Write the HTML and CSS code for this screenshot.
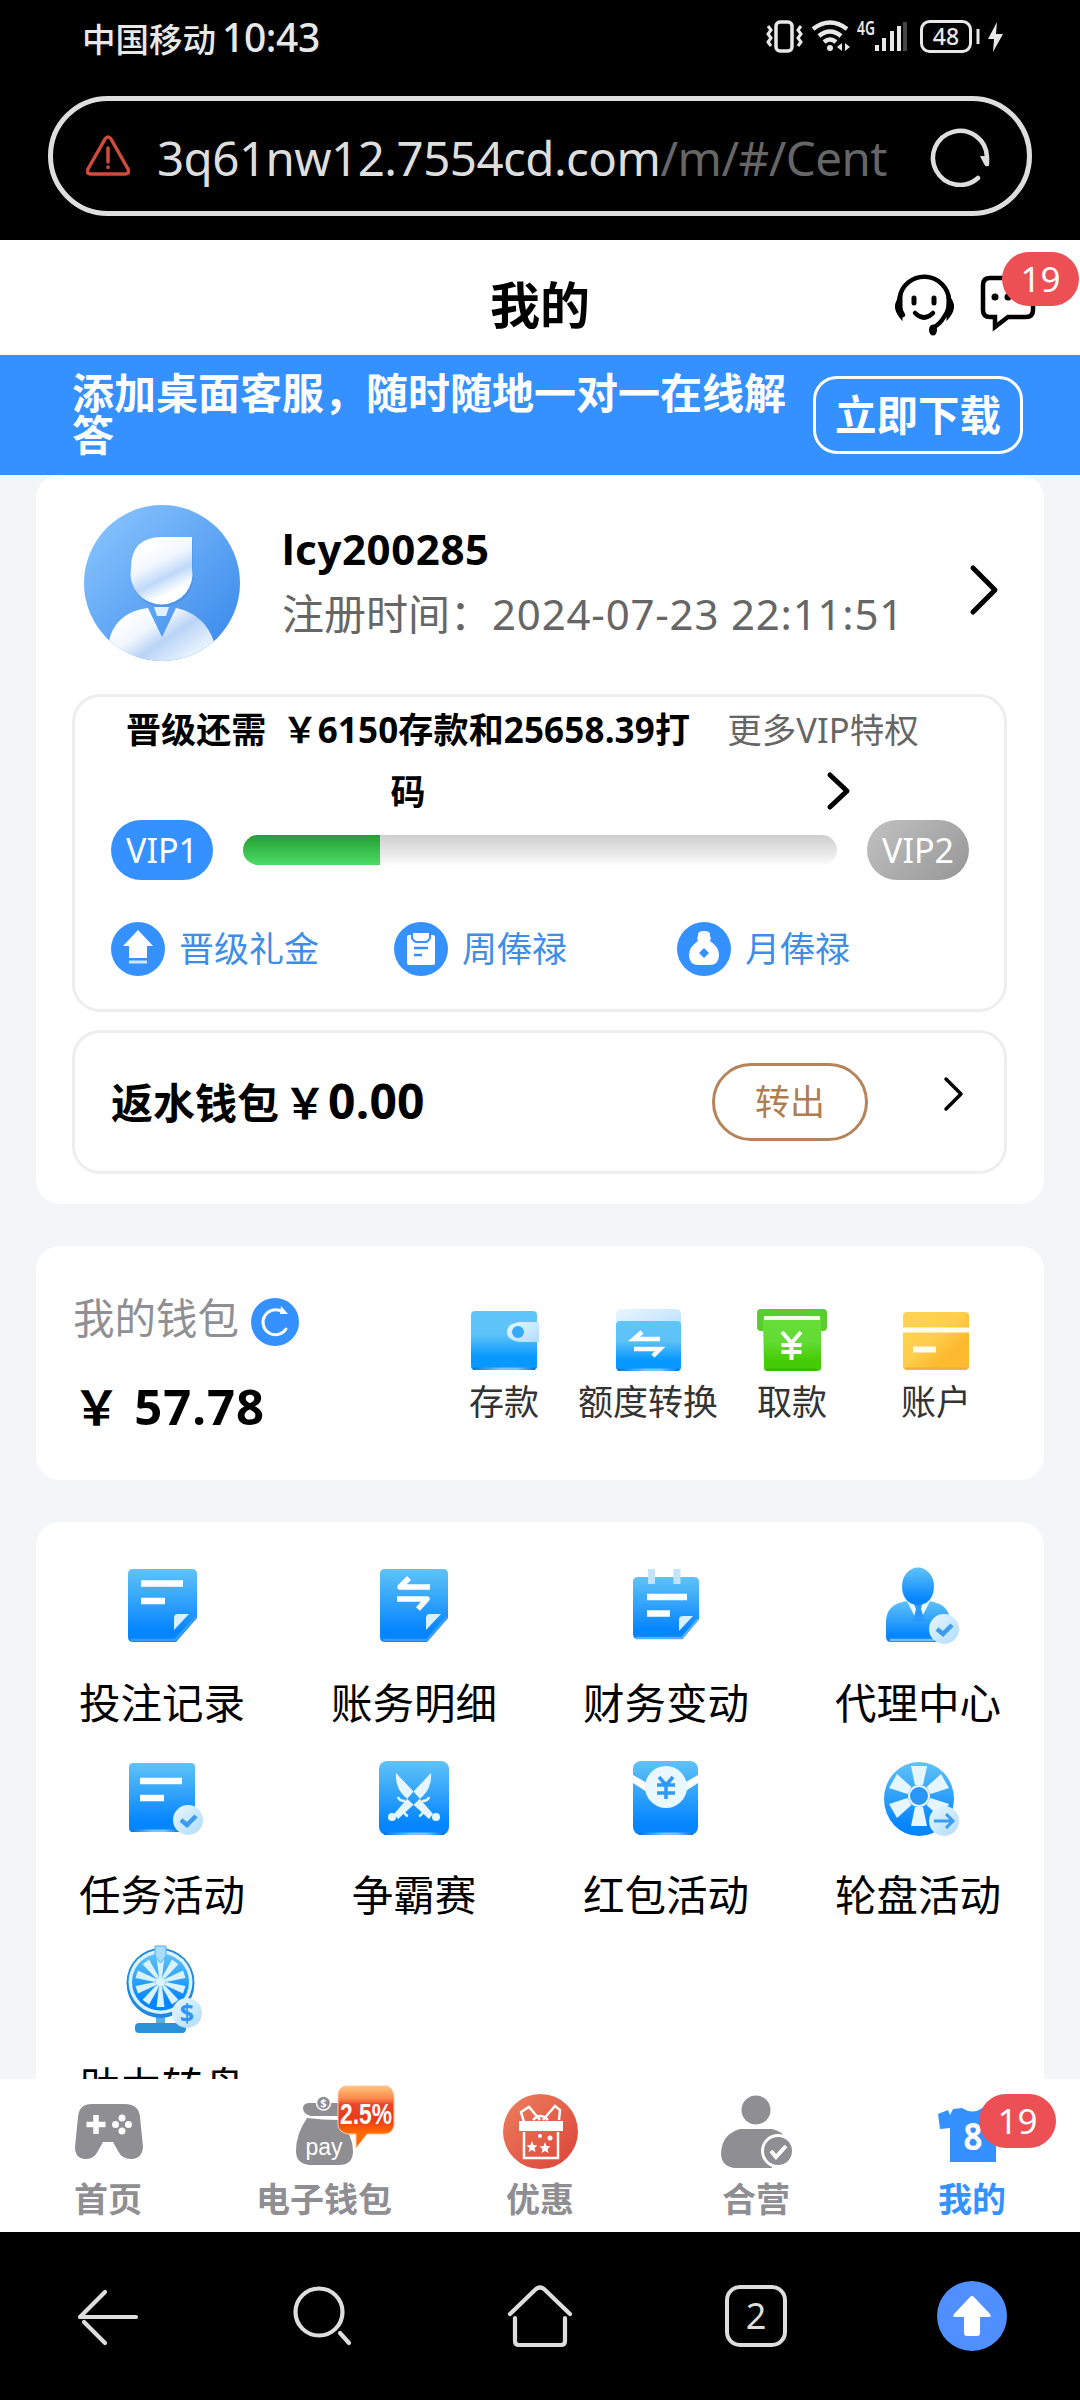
FILE: index.html
```html
<!DOCTYPE html>
<html lang="zh-CN">
<head>
<meta charset="utf-8">
<title>我的</title>
<link rel="stylesheet" href="styles.css">
</head>
<body>
<svg class="defs" width="0" height="0" aria-hidden="true">
  <defs>
    <linearGradient id="blue" x1="0" y1="0" x2="0" y2="1"><stop offset="0" stop-color="#60c3f7"/><stop offset=".85" stop-color="#0585ff"/><stop offset="1" stop-color="#0585ff"/></linearGradient>
    <linearGradient id="wallet" x1="0" y1="0" x2="0" y2="1"><stop offset="0" stop-color="#60c5f8"/><stop offset=".4" stop-color="#5cc2f8"/><stop offset=".78" stop-color="#0799ff"/><stop offset="1" stop-color="#0799ff"/></linearGradient>
    <linearGradient id="green" x1="0" y1="0" x2="0" y2="1"><stop offset="0" stop-color="#66e039"/><stop offset=".45" stop-color="#62db35"/><stop offset=".8" stop-color="#46cc05"/><stop offset="1" stop-color="#46cc05"/></linearGradient>
    <linearGradient id="gold" x1="0" y1="0" x2="1" y2="1"><stop offset="0" stop-color="#fed453"/><stop offset=".45" stop-color="#fecf4c"/><stop offset=".7" stop-color="#fdba31"/><stop offset="1" stop-color="#fdba31"/></linearGradient>
    <linearGradient id="pale" x1="0" y1="0" x2="1" y2="1"><stop offset="0" stop-color="#e9f6ff"/><stop offset="1" stop-color="#afdcfe"/></linearGradient>
    <linearGradient id="edge" x1="0" y1="0" x2="1" y2="0"><stop offset="0" stop-color="#0875d3"/><stop offset=".45" stop-color="#77c4ff"/><stop offset=".7" stop-color="#77c4ff"/><stop offset="1" stop-color="#0875d3"/></linearGradient>
    <linearGradient id="avatar" x1="0" y1="0" x2="1" y2="1"><stop offset=".1" stop-color="#85c1fd"/><stop offset=".85" stop-color="#4190ee"/></linearGradient>
    <linearGradient id="head" gradientUnits="userSpaceOnUse" x1="140" y1="535" x2="172" y2="600"><stop offset=".2" stop-color="#fff"/><stop offset=".45" stop-color="#f1f7ff"/><stop offset=".68" stop-color="#bfd9f8"/><stop offset=".9" stop-color="#fff"/></linearGradient>
    <linearGradient id="torso" gradientUnits="userSpaceOnUse" x1="128" y1="605" x2="170" y2="668"><stop offset=".1" stop-color="#fff"/><stop offset=".4" stop-color="#f1f7ff"/><stop offset=".65" stop-color="#b9d4f6"/><stop offset="1" stop-color="#e6f1ff"/></linearGradient>
    <linearGradient id="red" x1="0" y1="0" x2="1" y2="1"><stop offset="0" stop-color="#ec805e"/><stop offset="1" stop-color="#dc4238"/></linearGradient>
    <linearGradient id="tag" x1="0" y1="0" x2="0" y2="1"><stop offset="0" stop-color="#ffc47c"/><stop offset=".2" stop-color="#fb8a4d"/><stop offset=".3" stop-color="#e8462a"/><stop offset=".55" stop-color="#ea3a1a"/><stop offset=".75" stop-color="#ff6a00"/><stop offset="1" stop-color="#ff6a00"/></linearGradient>
    <clipPath id="face"><circle cx="162" cy="583" r="78"/></clipPath>
  </defs>
</svg>

<header class="system">
  <div class="status">
    <span>中国移动<b>10:43</b></span>
    <svg width="240" height="36" viewBox="765 18 240 36" fill="none" stroke="#e8e8e8" stroke-width="3">
      <rect x="776" y="22" width="16" height="29" rx="4" stroke-width="3.500"/>
      <path d="M768 26l3 4-3 4 3 4-3 4 3 4M801 26l-3 4 3 4-3 4 3 4-3 4"/>
      <path d="M813 29q17-13 34 0M819 36q11-9 22 0M824 42q6-5 12 0" stroke-width="4.500"/>
      <circle cx="830" cy="48" r="3" fill="#e8e8e8" stroke="none"/>
      <path d="M842 43v8l-5-4zM845 43v8l5-4z" fill="#e8e8e8" stroke="none"/>
      <text x="857" y="35" class="net" textLength="18" lengthAdjust="spacingAndGlyphs">4G</text>
      <path d="M877 45v6M884 38v13M892 31v20M899 26v25" stroke-width="4"/><path d="M905 22v29" stroke="#444" stroke-width="4"/>
      <rect x="921.500" y="21.500" width="49" height="30" rx="8"/><path d="M978 29v15"/>
      <text x="946" y="45" class="charge">48</text>
      <path d="M997 22l-9 17h6l-1 13 10-18h-7z" fill="#e8e8e8" stroke="none"/>
    </svg>
  </div>
  <div class="address">
    <svg width="46" height="42" viewBox="85 135 46 42" fill="none" stroke="#cf4c3d" stroke-width="3.500" stroke-linecap="round" stroke-linejoin="round"><path d="M105 139q3-4 6 0l17 30q2 5-3 5H91q-5 0-3-5zM108 148v14M108 167v.5"/></svg>
    <span class="url">3q61nw12.7554cd.com<i>/m/#/Cent</i></span>
    <svg width="62" height="62" viewBox="929 125 62 62"><path d="M978 178A27 27 0 1 1 987 157V164" fill="none" stroke="#dedede" stroke-width="4.500" stroke-linecap="round"/><path d="M980 156h9v9q-3 3-5-1z" fill="#dedede"/></svg>
  </div>
</header>

<div class="title">
  <h1>我的</h1>
  <div class="tools">
    <svg width="62" height="62" viewBox="893 275 62 62" fill="none" stroke="#000" stroke-width="4.500" stroke-linecap="round"><path d="M903 316A25 25 0 1 1 944 318Q940 325 934 328"/><path d="M914 299v5M934 299v5" stroke-width="5"/><path d="M915 314q9 9 18 0"/><path d="M901 298q-9 9 0 20zM948 298q9 9 0 20z" fill="#000" stroke-width="3"/><ellipse cx="933" cy="331" rx="4" ry="5.500" fill="#000" stroke="none"/></svg>
    <div class="holder">
      <svg width="56" height="58" viewBox="980 277 56 58"><path d="M990 281h36q7 0 7 7v25q0 7-7 7h-18l-13 10v-10h-5q-7 0-7-7v-25q0-7 7-7z" fill="none" stroke="#000" stroke-width="4.500"/><circle cx="995" cy="300" r="3.500"/><circle cx="1008" cy="300" r="3.500"/><circle cx="1021" cy="300" r="3.500"/></svg>
      <span class="badge top">19</span>
    </div>
  </div>
</div>

<div class="banner"><p>添加桌面客服，随时随地一对一在线解答</p><button>立即下载</button></div>

<main>
  <section class="card profile">
    <div class="user">
      <svg width="156" height="156" viewBox="84 505 156 156"><circle cx="162" cy="583" r="78" fill="url(#avatar)"/><path d="M162 537h30v31a31 31 0 1 1-61 0q0-31 31-31z" fill="#3a7fd5" opacity=".3" transform="translate(1 3)"/><path d="M162 537h30v31a31 31 0 1 1-61 0q0-31 31-31z" fill="url(#head)"/><g clip-path="url(#face)"><path d="M109 642C113 620 130 610 148 608L162 637 176 608C192 611 208 622 214 642V662H109z" fill="url(#torso)"/></g><path d="M154 607h15l-3 9h-9z" fill="#e3effd"/></svg>
      <div class="who"><h2>lcy200285</h2><p>注册时间：<span>2024-07-23 22:11:51</span></p></div>
      <svg width="32" height="52" viewBox="967 564 32 52" class="chev"><path d="M973 568l22 22-22 22"/></svg>
    </div>

    <div class="vip">
      <div class="need">
        <p>晋级还需<span class="sum">￥6150存款和25658.39打码</span></p>
        <div class="more"><span>更多VIP特权</span><svg width="28" height="40" viewBox="825 771 28 40" class="chev"><path d="M830 775l17 16-17 16"/></svg></div>
      </div>
      <div class="progress"><span class="pill">VIP1</span><div class="track"><div class="fill" style="width:137px"></div></div><span class="pill next">VIP2</span></div>
      <div class="gifts">
        <div><svg width="54" height="54" viewBox="111 922 54 54"><circle cx="138" cy="949" r="27" fill="#3491ff"/><path d="M138 930l15 16h-6v12h-18v-12h-6z" fill="#fff"/><path d="M129 962h18" stroke="#cfe6ff" stroke-width="3"/></svg>晋级礼金</div>
        <div><svg width="54" height="54" viewBox="394 922 54 54"><circle cx="421" cy="949" r="27" fill="#3491ff"/><path d="M409 935h24q2 0 2 2v26q0 2-2 2h-24q-2 0-2-2v-26q0-2 2-2z" fill="#fff"/><path d="M412 932h18v6q-2 4-5 4h-8q-3 0-5-4z" fill="#fff" stroke="#3491ff" stroke-width="2"/><path d="M414 948h14M414 955h8" stroke="#3491ff" stroke-width="2.500"/></svg>周俸禄</div>
        <div><svg width="54" height="54" viewBox="677 922 54 54"><circle cx="704" cy="949" r="27" fill="#3491ff"/><path d="M699 942q-3-3-1-6-1-5 6-5t6 5q2 3-1 6z" fill="#fff"/><path d="M698 941h12q9 6 9 14 0 10-10 10h-10q-10 0-10-10 0-8 9-14z" fill="#fff"/><path d="M704 948l5 5-5 5-5-5z" fill="#3491ff"/></svg>月俸禄</div>
      </div>
    </div>

    <div class="rebate"><h3>返水钱包<span>￥</span><b>0.00</b></h3><button>转出</button><svg width="24" height="36" viewBox="940 1076 24 36" class="chev thin"><path d="M944 1079l15 15-15 15"/></svg></div>
  </section>

  <section class="card money">
    <div class="balance">
      <p>我的钱包<svg width="48" height="48" viewBox="251 1298 48 48"><circle cx="275" cy="1322" r="24" fill="#3491ff"/><path d="M286 1329A12.500 12.500 0 1 1 281 1311" fill="none" stroke="#fff" stroke-width="3" stroke-linecap="round"/><path d="M281 1306l7 8-8 0z" fill="#fff"/></svg></p>
      <strong>￥ <b>57.78</b></strong>
    </div>
    <div class="actions">
      <div><svg width="72" height="66" viewBox="468 1307 72 66"><rect x="471" y="1311" width="66" height="59" rx="4" fill="url(#wallet)"/><path d="M519 1322h20v20h-20q-12-2-12-10t12-10z" fill="url(#pale)"/><circle cx="518" cy="1332" r="6" fill="#36a9f8"/><rect x="473" y="1367.500" width="62" height="2.500" fill="url(#edge)"/></svg>存款</div>
      <div><svg width="72" height="66" viewBox="612 1307 72 66"><rect x="616" y="1309" width="65" height="30" rx="5" fill="url(#pale)"/><rect x="616" y="1321" width="65" height="50" rx="4" fill="url(#wallet)"/><rect x="618" y="1368.500" width="61" height="2.500" fill="url(#edge)"/><path d="M660 1339h-26l8-7M634 1349h26l-7 7" fill="none" stroke="#fff" stroke-width="4.500"/></svg>额度转换</div>
      <div><svg width="72" height="66" viewBox="756 1307 72 66"><rect x="757" y="1309" width="70" height="22" rx="4" fill="#59cc2e"/><path d="M763 1318h58v50q0 3-3 3h-51q-3 0-3-3z" fill="url(#green)"/><path d="M764 1318h56" stroke="#f3ffeb" stroke-width="4"/><path d="M782 1332l9.500 11 9.500-11M781.500 1345h20M781.500 1352h20M791.500 1343v17" fill="none" stroke="#fff" stroke-width="4"/><path d="M766 1369.500h51" stroke="#2eb513" stroke-width="2"/></svg>取款</div>
      <div><svg width="72" height="66" viewBox="900 1307 72 66"><rect x="903" y="1312" width="66" height="58" rx="4" fill="url(#gold)"/><path d="M903 1330h66" stroke="#fffdf0" stroke-width="5"/><path d="M913 1349.500h23" stroke="#fffdf0" stroke-width="6"/><path d="M905 1368.500h62" stroke="#e9b23f" stroke-width="2"/></svg>账户</div>
    </div>
  </section>

  <section class="card menu">
    <div><svg width="96" height="96" viewBox="114 1558 96 96"><path d="M133 1569h59q5 0 5 5v44l-21 24h-43q-5 0-5-5v-63q0-5 5-5z" fill="url(#blue)"/><path d="M131 1640h44l21-23" fill="none" stroke="#399df5" stroke-width="2.500"/><path d="M141 1583.500h42M141 1601h24" stroke="#fff" stroke-width="6.500"/><path d="M174 1630v-12q0-4 4-4h11z" fill="#d8f0ff"/></svg>投注记录</div>
    <div><svg width="96" height="96" viewBox="366 1558 96 96"><path d="M385 1569h58q5 0 5 5v44l-21 24h-42q-5 0-5-5v-63q0-5 5-5z" fill="url(#blue)"/><path d="M383 1640h44l20-23" fill="none" stroke="#399df5" stroke-width="2.500"/><path d="M430 1587h-30l9-9M397 1599h30l-9 10" fill="none" stroke="#fff" stroke-width="5.500" stroke-linejoin="round"/><path d="M426 1630v-12q0-4 4-4h11z" fill="#d8f0ff"/></svg>账务明细</div>
    <div><svg width="96" height="96" viewBox="618 1558 96 96"><path d="M638 1577h56q5 0 5 5v37l-17 20h-44q-5 0-5-5v-52q0-5 5-5z" fill="url(#blue)"/><path d="M636 1638h46l16-19" fill="none" stroke="#54adff" stroke-width="2.500"/><path d="M651.500 1569v15M677 1569v15" stroke="#c0e4fb" stroke-width="7"/><path d="M647 1597h40M647 1613.500h23" stroke="#fff" stroke-width="6.500"/><path d="M679 1631v-11q0-4 4-4h10z" fill="#d8f0ff"/></svg>财务变动</div>
    <div><svg width="96" height="96" viewBox="870 1558 96 96"><path d="M886 1622q0-18 21-21h22q21 3 21 21v20h-59q-5 0-5-5z" fill="url(#blue)"/><path d="M907 1601l8 16h7l8-16z" fill="#effaff"/><path d="M914 1604h8l-1 5 4 12h-12l3-12z" fill="#2997fb"/><path d="M902 1586a16 18.500 0 0 1 32 0q0 12-8 17-8 4-16 0-8-5-8-17z" fill="url(#blue)"/><path d="M890 1640h44" stroke="#70c0ff" stroke-width="2.500"/><circle cx="944" cy="1629" r="15" fill="url(#pale)"/><path d="M937 1629l6 5 9-9" fill="none" stroke="#3b9bec" stroke-width="4.500"/></svg>代理中心</div>

    <div><svg width="96" height="96" viewBox="114 1750 96 96"><rect x="129" y="1763" width="66" height="69" rx="4" fill="url(#blue)"/><rect x="131" y="1829.500" width="48" height="2.500" fill="url(#edge)"/><path d="M140 1781h42M140 1798h24" stroke="#fff" stroke-width="6.500"/><circle cx="188" cy="1820" r="15" fill="url(#pale)"/><path d="M181 1820l6 5 9-9" fill="none" stroke="#3b9bec" stroke-width="4.500"/></svg>任务活动</div>
    <div><svg width="96" height="96" viewBox="366 1750 96 96"><rect x="379" y="1761" width="70" height="74" rx="8" fill="url(#blue)"/><rect x="384" y="1832.500" width="60" height="2.500" fill="url(#edge)"/><g fill="#e6f6ff"><path d="M396 1773q-1 14 8 23l25 23 4-5-19-22zM431 1773q1 14-8 23l-25 23-4-5 19-22z"/><circle cx="392" cy="1817" r="4"/><circle cx="436" cy="1817" r="4"/></g><path d="M398 1797q1 4 7 4M429 1797q-1 4-7 4M403 1808q1 7 5 8M424 1808q-1 7-5 8" fill="none" stroke="#e6f6ff" stroke-width="2.500"/></svg>争霸赛</div>
    <div><svg width="96" height="96" viewBox="618 1750 96 96"><rect x="633" y="1761" width="65" height="74" rx="8" fill="url(#blue)"/><rect x="639" y="1832.500" width="54" height="2.500" fill="url(#edge)"/><path d="M633 1775l14 8h37l14-8v8l-17 11h-31l-17-11z" fill="#fff"/><circle cx="666" cy="1787" r="21" fill="#e9f7ff"/><path d="M659 1777l7 8 7-8M657 1785h18M657 1793h18M666 1785v14" fill="none" stroke="#3099f7" stroke-width="3.500"/></svg>红包活动</div>
    <div><svg width="96" height="96" viewBox="870 1750 96 96"><ellipse cx="919" cy="1799" rx="35" ry="37" fill="url(#blue)"/><g fill="#e6f6ff"><path id="vane" d="M911 1766h16l-4 19h-8z"/><use href="#vane" transform="rotate(60 919 1796)"/><use href="#vane" transform="rotate(120 919 1796)"/><use href="#vane" transform="rotate(180 919 1796)"/><use href="#vane" transform="rotate(240 919 1796)"/><use href="#vane" transform="rotate(300 919 1796)"/></g><circle cx="919" cy="1796" r="10" fill="#2997fa" stroke="#e6f6ff" stroke-width="2"/><circle cx="944" cy="1821" r="15" fill="url(#pale)"/><path d="M934 1821h18M946 1814l7 7-7 7" fill="none" stroke="#3b9bec" stroke-width="3"/></svg>轮盘活动</div>

    <div><svg width="96" height="96" viewBox="114 1942 96 96"><path d="M156 2014h9v11h-9z" fill="#5aaee8"/><rect x="135" y="2023" width="51" height="10" rx="4" fill="#2a91d9"/><ellipse cx="160.500" cy="1983" rx="34" ry="35" fill="#2189db"/><circle cx="160.500" cy="1982" r="32" fill="#d9f2ff"/><circle cx="160.500" cy="1982" r="28.500" fill="url(#blue)"/><g fill="#d9f2ff"><path id="ray" d="M156.500 1957h8l-2.500 20h-3z"/><use href="#ray" transform="rotate(36 160.500 1982)"/><use href="#ray" transform="rotate(72 160.500 1982)"/><use href="#ray" transform="rotate(108 160.500 1982)"/><use href="#ray" transform="rotate(144 160.500 1982)"/><use href="#ray" transform="rotate(180 160.500 1982)"/><use href="#ray" transform="rotate(216 160.500 1982)"/><use href="#ray" transform="rotate(252 160.500 1982)"/><use href="#ray" transform="rotate(288 160.500 1982)"/><use href="#ray" transform="rotate(324 160.500 1982)"/><circle cx="160.500" cy="1982" r="5"/></g><path d="M155 1946h11v10l-5.500 7-5.500-7z" fill="#a8dcfa" stroke="#4fb1ee"/><circle cx="187" cy="2013" r="15" fill="url(#pale)"/><text x="187" y="2022" class="coin">$</text></svg>助力转盘</div>
  </section>
</main>

<nav class="tabs">
  <div><svg width="96" height="92" viewBox="60 2084 96 92"><path d="M92 2104h32q15 0 16 13l3 30q-1 12-12 12-9 0-13-8l-5-9h-10l-5 9q-4 8-12 8-11 0-11-12l3-30q1-13 14-13z" fill="#8e8e93"/><path d="M96 2115v19M86.500 2124.500h19" stroke="#fff" stroke-width="5.500"/><g fill="#fff"><circle cx="122" cy="2118" r="3.500"/><circle cx="122" cy="2131" r="3.500"/><circle cx="115.500" cy="2124.500" r="3.500"/><circle cx="128.500" cy="2124.500" r="3.500"/></g></svg>首页</div>
  <div class="holder"><svg width="96" height="92" viewBox="276 2084 96 92"><path d="M308 2103h34v13h-31q-8-2-8-8 0-4 5-5zM307 2118q15 2 32 2 14 15 14 31 0 14-14 14h-29q-14-1-14-14 0-17 11-33z" fill="#8e8e93"/><circle cx="323.500" cy="2103" r="7" fill="#8e8e93" stroke="#fff" stroke-width="1.500"/><text x="323.500" y="2107" class="cent">$</text><text x="324" y="2155" class="pay">pay</text></svg>电子钱包<svg class="offer" width="62" height="66" viewBox="335 2084 62 66"><path d="M344 2086h44q6 4 6 11v29q-2 8-10 8h-17l-11 14v-14h-8q-9-2-10-8v-31q0-6 6-9z" fill="url(#tag)" stroke="#ffc9a0" stroke-width="1"/><text x="340" y="2124" class="rate" textLength="52" lengthAdjust="spacingAndGlyphs">2.5%</text></svg></div>
  <div><svg width="96" height="92" viewBox="492 2084 96 92"><circle cx="540.500" cy="2131.500" r="37.500" fill="url(#red)"/><g fill="none" stroke="#fff" stroke-width="2.500"><path d="M524 2132v26h34v-26M540 2120l-11-13-8 5 3 10M543 2120l12-14 5 4-1 10M533 2120q7-8 15 0"/></g><path d="M519 2121h44v10h-44z" fill="#fff"/><path d="M532 2141l1.500 4 4 .5-3 2.500 1 4-3.500-2-3.500 2 1-4-3-2.500 4-.5zM545 2142l1.500 4 4 .5-3 2.500 1 4-3.500-2-3.500 2 1-4-3-2.500 4-.5z" fill="#fff"/><circle cx="550" cy="2138" r="2.500" fill="#fff"/><circle cx="540" cy="2136" r="2" fill="#fff"/></svg>优惠</div>
  <div><svg width="96" height="92" viewBox="708 2084 96 92" fill="#8e8e93"><circle cx="756" cy="2110" r="14.500"/><path d="M740 2129h32q10 2 14 10v29h-52q-13-2-13-15 1-19 19-24z"/><circle cx="778" cy="2151" r="17" fill="#fff"/><path d="M772 2160h20v11h-20z" fill="#fff"/><circle cx="778" cy="2151" r="14"/><path d="M771 2151l5 6 10-11" fill="none" stroke="#fff" stroke-width="4"/></svg>合营</div>
  <div class="holder active"><svg width="96" height="92" viewBox="924 2084 96 92"><path d="M962 2108q11 7 20 0l14 4v50h-46v-34l-10 1-2-15 10-4 2 5 3-6z" fill="#3491ff"/><text x="973" y="2150" class="eight" textLength="19" lengthAdjust="spacingAndGlyphs">8</text></svg>我的<span class="badge mine">19</span></div>
</nav>

<footer class="browser">
  <svg width="72" height="80" viewBox="72 2276 72 80" class="line"><path d="M105 2292l-25 25h56M84 2322l21 21"/></svg>
  <svg width="72" height="80" viewBox="288 2276 72 80" class="line"><circle cx="319" cy="2312" r="23.500"/><path d="M340 2333l9 10"/></svg>
  <svg width="72" height="80" viewBox="504 2276 72 80" class="line"><path d="M510 2314l26-25q4-3 8 0l26 25M515 2318v23q0 4 4 4h42q4 0 4-4v-23"/></svg>
  <span class="pages">2</span>
  <svg width="72" height="80" viewBox="936 2276 72 80"><circle cx="972" cy="2316" r="35" fill="#508fff"/><path d="M970 2297q2-2 4 0l16 17q2 3-1 3h-9v16q0 3-3 3h-10q-3 0-3-3v-16h-9q-3 0-1-3z" fill="#fff"/></svg>
</footer>
</body>
</html>
```
FILE: styles.css
```css
* { box-sizing: border-box; margin: 0; padding: 0; }
body {
  width: 1080px; height: 2400px; overflow: hidden;
  display: flex; flex-direction: column;
  font-family: "Noto Sans", "Noto Sans CJK SC", sans-serif;
  background: #f4f5f7; color: #000;
}
svg { display: block; flex: none; }
button { background: none; font: inherit; color: inherit; white-space: nowrap; }
.defs { position: absolute; }
.chev { fill: none; stroke: #000; stroke-width: 5; stroke-linecap: round; stroke-linejoin: round; }
.thin { stroke-width: 3.5; }

.system { height: 240px; flex: none; background: #000; color: #e8e8e8; }
.status { height: 96px; padding: 18px 75px 0 82px; display: flex; justify-content: space-between; align-items: flex-start; font-size: 33.500px; line-height: 38px; font-weight: 500; }
.status svg { overflow: visible; }
.status b { font-size: 39px; font-weight: 500; margin-left: 6px; letter-spacing: -.4px; }
.net { font-size: 19px; font-weight: 600; fill: #e8e8e8; stroke: none; }
.charge { font-size: 23px; fill: #e8e8e8; stroke: none; text-anchor: middle; font-weight: 500; }
.address { height: 120px; margin: 0 48px; padding: 0 36px 0 32px; border: 5px solid #dedede; border-radius: 60px; display: flex; align-items: center; }
.url { flex: 1; margin-left: 26px; font-size: 47.500px; line-height: 60px; white-space: nowrap; padding-top: 4px; color: #dedede; letter-spacing: -.55px; }
.url i { font-style: normal; color: #666; }

.title { height: 115px; flex: none; background: #fff; display: grid; grid-template-columns: 1fr auto 1fr; align-items: center; padding-top: 15px; }
.title h1 { grid-column: 2; font-size: 50px; line-height: 60px; font-weight: 600; }
.tools { justify-self: end; display: flex; gap: 25px; padding-right: 44px; }
.holder { position: relative; }
.badge { position: absolute; width: 77px; height: 54px; border-radius: 27px; background: #ec5055; color: #fff; font-size: 35px; line-height: 54px; text-align: center; font-weight: 400; }
.top { left: 22px; top: -22px; }
.mine { left: 115px; top: 15px; }

.banner { height: 120px; flex: none; background: #3491ff; color: #fff; display: flex; align-items: flex-start; padding: 17px 57px 0 72px; font-weight: 700; font-size: 42px; }
.banner p { width: 721px; margin-right: 20px; line-height: 42px; }
.banner button { width: 210px; height: 78px; margin-top: 4px; border: 3px solid #fff; border-radius: 24px; line-height: 68px; font-size: 41.500px; }

main { height: 1604px; flex: none; overflow: hidden; display: flex; flex-direction: column; gap: 42px; padding: 0 36px; }
.card { background: #fff; border-radius: 24px; flex: none; }
.profile { height: 729px; padding: 30px 37px 0 36px; }
.user { display: flex; height: 156px; margin-left: 12px; }
.who { width: 685px; margin-left: 42px; }
.who h2 { font-size: 42px; line-height: 56px; margin-top: 16px; font-weight: 700; letter-spacing: .6px; }
.who p { font-size: 42px; line-height: 60px; margin-top: 7px; color: #666; white-space: nowrap; }
.who p span { font-size: 42px; letter-spacing: .8px; }
.user .chev { margin-top: 59px; }
.vip { height: 318px; margin-top: 33px; border: 3px solid #eee; border-radius: 28px; padding: 2px 35px 0 36px; font-size: 35px; }
.need { display: flex; line-height: 62px; height: 121px; }
.need p { width: 576px; margin-left: 9px; text-align: center; font-weight: 700; letter-spacing: .15px; }
.sum { margin-left: 16px; }
.more { width: 220px; margin-left: 17px; color: #666; display: flex; flex-direction: column; align-items: center; font-size: 34.500px; }
.more .chev { margin: 10px 0 0 32px; }
.progress { display: flex; justify-content: space-between; align-items: center; height: 60px; }
.pill { width: 102px; height: 60px; border-radius: 30px; background: #3491ff; color: #fff; text-align: center; line-height: 60px; font-size: 34px; }
.next { background: linear-gradient(135deg, #c2c2c2, #969696); }
.track { width: 594px; height: 30px; border-radius: 15px; overflow: hidden; background: linear-gradient(#cecece, #fafafa); }
.fill { height: 30px; background: linear-gradient(#259d35, #4bdd63); }
.gifts { display: grid; grid-template-columns: repeat(3, 283px); margin-top: 41px; color: #3c8ee9; }
.gifts div { display: flex; align-items: center; gap: 14px; line-height: 56px; }
.rebate { height: 144px; margin-top: 18px; border: 3px solid #eee; border-radius: 28px; display: flex; padding: 30px 38px 0 36px; }
.rebate h3 { width: 601px; font-size: 42px; line-height: 76px; font-weight: 700; white-space: nowrap; }
.rebate h3 span { margin: 0 2px 0 5px; }
.rebate b { font-size: 48px; font-weight: 700; letter-spacing: .2px; }
.rebate button { width: 156px; height: 78px; border: 3px solid #b4845a; border-radius: 39px; color: #b07d50; font-size: 35px; line-height: 68px; }
.rebate .chev { margin: 13px 0 0 74px; }

.money { height: 234px; padding: 41px 36px 0 37px; display: flex; }
.balance { width: 359px; }
.balance p { display: flex; color: #909094; font-size: 41.500px; line-height: 62px; }
.balance svg { margin: 11px 0 0 12px; }
.balance strong { display: block; font-size: 47px; line-height: 70px; margin-top: 22px; white-space: pre; font-weight: 700; }
.balance b { font-size: 49px; font-weight: 700; letter-spacing: 1px; margin-left: 2px; }
.actions { display: grid; grid-template-columns: repeat(4, 144px); padding-top: 20px; }
.actions div { display: flex; flex-direction: column; align-items: center; font-size: 35px; line-height: 50px; color: #333; gap: 4px; white-space: nowrap; }

.menu { display: grid; grid-template-columns: repeat(4, 252px); grid-auto-rows: 192px; padding-top: 36px; }
.menu div { display: flex; flex-direction: column; align-items: center; gap: 19px; font-size: 41.500px; line-height: 60px; }
.coin { font-size: 25px; font-weight: 700; fill: #2997fb; text-anchor: middle; }

.tabs { height: 153px; flex: none; background: #fff; display: grid; grid-template-columns: repeat(5, 216px); position: relative; }
.tabs > div { display: flex; flex-direction: column; align-items: center; padding-top: 5px; font-size: 34px; line-height: 46px; font-weight: 700; color: #8e8e93; }
.tabs > .active { color: #3491ff; }
.offer { position: absolute; left: 119px; top: 5px; }
.cent { font-size: 11px; fill: #fff; text-anchor: middle; }
.pay { font: 23px "Liberation Sans", sans-serif; fill: #fff; text-anchor: middle; }
.rate { font: 700 29px "Liberation Sans", sans-serif; fill: #fff; }
.eight { font-size: 38px; font-weight: 700; fill: #fff; text-anchor: middle; }

.browser { height: 168px; flex: none; background: #000; display: grid; grid-template-columns: repeat(5, 216px); justify-items: center; align-items: center; }
.line { fill: none; stroke: #dedede; stroke-width: 4.200; stroke-linecap: round; stroke-linejoin: round; }
.pages { width: 62px; height: 62px; border: 4px solid #dedede; border-radius: 15px; color: #dedede; font-size: 36px; line-height: 54px; text-align: center; }
```
